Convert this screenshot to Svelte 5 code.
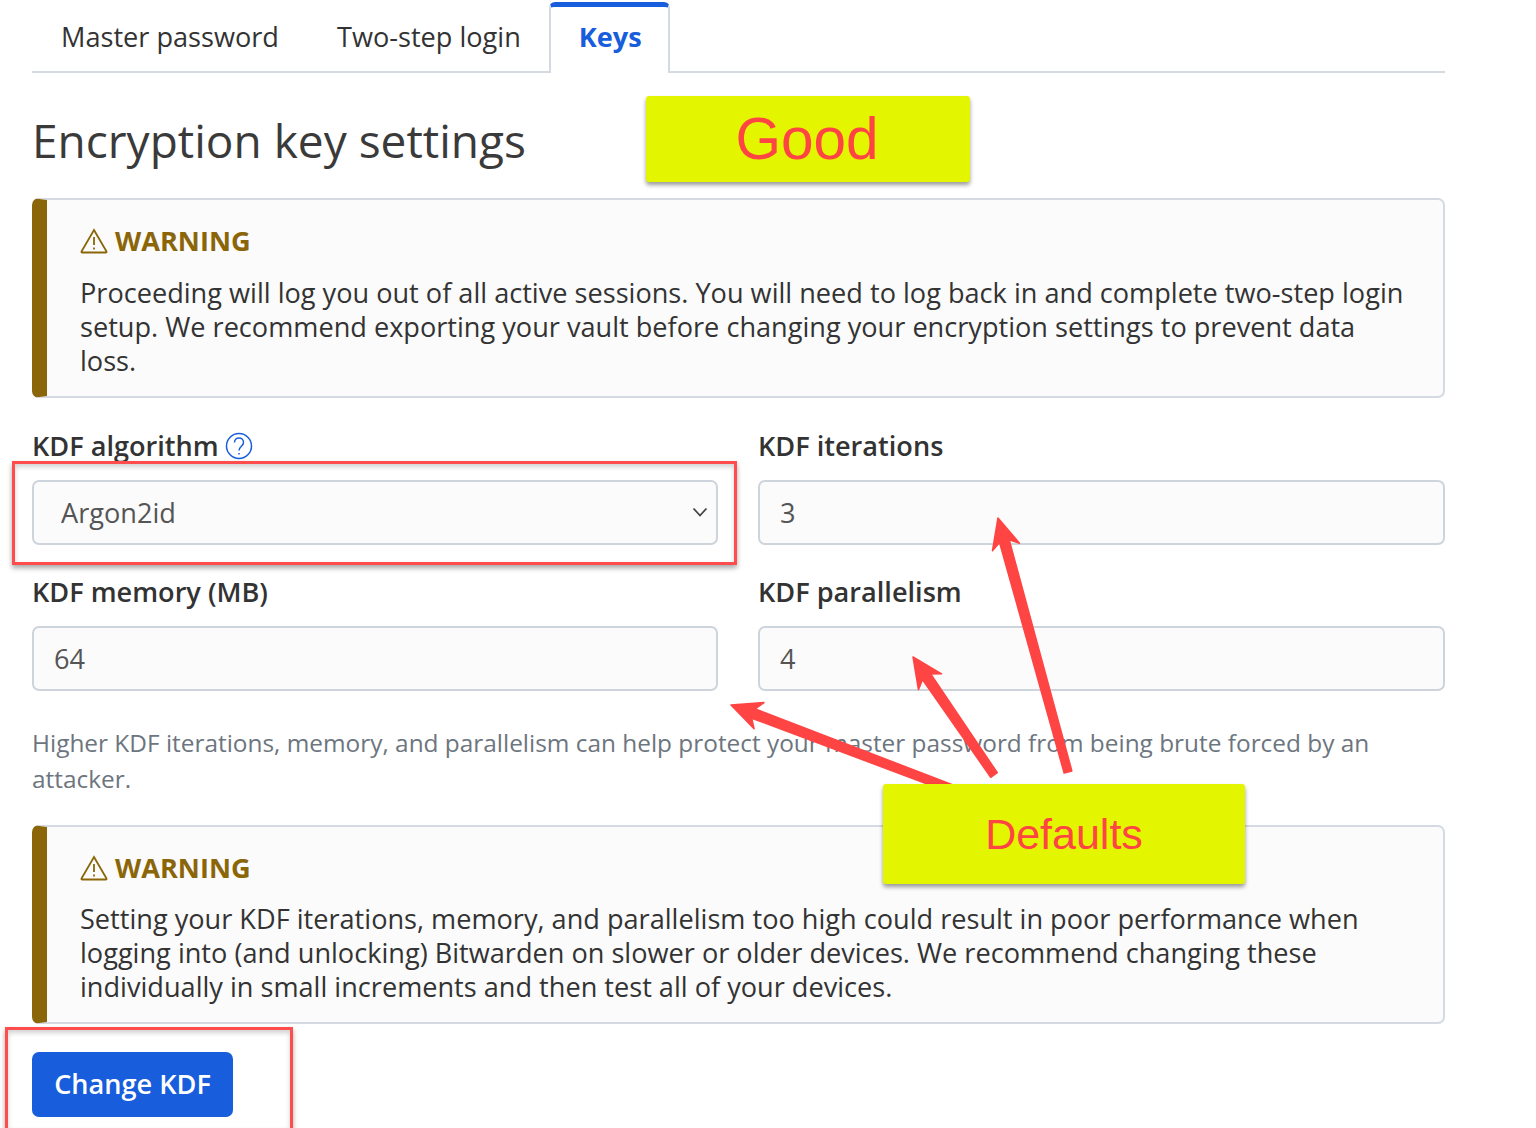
<script lang="ts">
  interface Arrow {
    tip: [number, number];
    tail: [number, number];
  }

  const tabs = ['Master password', 'Two-step login', 'Keys'];

  const arrows: Arrow[] = [
    { tip: [998, 518], tail: [1068, 772] },
    { tip: [913, 657], tail: [994, 775] },
    { tip: [731, 705], tail: [960, 792] },
  ];

  // tapered shaft with a flared head, same as the screenshot tool draws them
  function arrowPoints({ tip, tail }: Arrow) {
    const dx = tip[0] - tail[0];
    const dy = tip[1] - tail[1];
    const len = Math.hypot(dx, dy);
    const ux = dx / len;
    const uy = dy / len;
    const at = (along: number, side: number) =>
      `${tip[0] - ux * along - uy * side},${tip[1] - uy * along + ux * side}`;
    return [
      at(0, 0),
      at(30, 14),
      at(24, 5),
      at(len, 4),
      at(len, -4),
      at(24, -5),
      at(30, -14),
    ].join(' ');
  }
</script>

<div class="page">
  <nav class="tabs">
    {#each tabs as tab, i (tab)}
      <button class="tab" class:active={i === 2}>{tab}</button>
    {/each}
  </nav>

  <h1 class="title">Encryption key settings</h1>

  <div class="callout first">
    <div class="callout-title">
      <svg class="warn" viewBox="0 0 28 26" aria-hidden="true">
        <path d="M14 2 L26.5 23.5 a0.6 0.6 0 0 1 -0.5 1 H2 a0.6 0.6 0 0 1 -0.5 -1 Z" />
        <path d="M14 9 V17 M14 19.5 V21.5" />
      </svg>
      WARNING
    </div>
    <p>Proceeding will log you out of all active sessions. You will need to log back in and complete two-step login setup. We recommend exporting your vault before changing your encryption settings to prevent data loss.</p>
  </div>

  <div class="form-grid">
    <div class="field">
      <label for="kdf">
        KDF algorithm
        <svg class="help" viewBox="0 0 28 28" aria-hidden="true">
          <circle cx="14" cy="14" r="12.5" />
          <path d="M9.5 10.5 C9.5 4.5 18.5 4.5 18.5 10.5 C18.5 14 14 14.5 14 18.5 M14 21 V22.5" />
        </svg>
      </label>
      <div class="select-wrap">
        <select id="kdf" class="control select">
          <option>Argon2id</option>
        </select>
        <svg class="chevron" viewBox="0 0 16 10" aria-hidden="true">
          <path d="M1.5 1.5 L8 8.5 L14.5 1.5" />
        </svg>
      </div>
    </div>
    <div class="field">
      <label for="iterations">KDF iterations</label>
      <input id="iterations" class="control" value="3" />
    </div>
    <div class="field">
      <label for="memory">KDF memory (MB)</label>
      <input id="memory" class="control" value="64" />
    </div>
    <div class="field">
      <label for="parallelism">KDF parallelism</label>
      <input id="parallelism" class="control" value="4" />
    </div>
  </div>

  <p class="hint">Higher KDF iterations, memory, and parallelism can help protect your master password from being brute forced by an attacker.</p>

  <div class="callout">
    <div class="callout-title">
      <svg class="warn" viewBox="0 0 28 26" aria-hidden="true">
        <path d="M14 2 L26.5 23.5 a0.6 0.6 0 0 1 -0.5 1 H2 a0.6 0.6 0 0 1 -0.5 -1 Z" />
        <path d="M14 9 V17 M14 19.5 V21.5" />
      </svg>
      WARNING
    </div>
    <p>Setting your KDF iterations, memory, and parallelism too high could result in poor performance when logging into (and unlocking) Bitwarden on slower or older devices. We recommend changing these individually in small increments and then test all of your devices.</p>
  </div>

  <button class="submit">Change KDF</button>

  <!-- annotations pasted on top of the screenshot -->
  <svg class="arrows" viewBox="0 0 1536 1128" aria-hidden="true">
    {#each arrows as arrow}
      <polygon points={arrowPoints(arrow)} />
    {/each}
  </svg>
  <div class="note good">Good</div>
  <div class="note defaults">Defaults</div>
  <div class="frame frame-select"></div>
  <div class="frame frame-submit"></div>
</div>

<style>
  :global(body) {
    background: #fff;
    overflow: hidden;
  }

  .page {
    position: relative;
    width: 1536px;
    height: 1128px;
    box-sizing: border-box;
    padding: 2px 91px 0 32px;
    overflow: hidden;
    font-family: 'Open Sans', 'Noto Sans', sans-serif;
    font-size: 27.14px;
    line-height: 34px;
    color: #333;
  }

  .tabs {
    display: flex;
    height: 69px;
    border-bottom: 2px solid #d5dae2;
    box-sizing: content-box;
  }

  .tab {
    height: 69px;
    padding: 0 29px;
    border: 0;
    background: none;
    font: inherit;
    color: #333;
  }

  .tab.active {
    height: 71px;
    margin-left: -1px;
    padding: 0 26px 6px 28px;
    border: 2px solid #d5dae2;
    border-top: 5px solid #175ddc;
    border-bottom: 0;
    border-radius: 6px 6px 0 0;
    background: #fff;
    color: #175ddc;
    font-weight: 700;
  }

  .title {
    margin: 37px 0 0;
    font-size: 46px;
    line-height: 60px;
    font-weight: 400;
    color: #3a3a3a;
  }

  .callout {
    box-sizing: border-box;
    height: 199px;
    padding: 24px 30px 0 33px;
    border: 2px solid #d5dae2;
    border-left: 15px solid #8b6609;
    border-radius: 7px;
    background: #fbfbfb;
  }

  .callout.first {
    margin-top: 28px;
    height: 200px;
  }

  .callout-title {
    display: flex;
    align-items: center;
    gap: 7px;
    height: 34px;
    font-weight: 700;
    color: #8b6609;
  }

  .callout p {
    margin: 17px 0 0;
  }

  .callout.first p {
    margin-top: 18px;
  }

  .warn {
    width: 28px;
    height: 26px;
    fill: none;
    stroke: #8b6609;
    stroke-width: 1.8;
  }

  .form-grid {
    display: grid;
    grid-template-columns: 686px 687px;
    column-gap: 40px;
    row-gap: 30px;
    margin-top: 31px;
  }

  .field label {
    display: flex;
    align-items: center;
    gap: 6px;
    height: 34px;
    margin-bottom: 17px;
    font-weight: 600;
    color: #333;
  }

  .help {
    width: 28px;
    height: 28px;
    fill: none;
    stroke: #175ddc;
    stroke-width: 1.5;
  }

  .control {
    display: block;
    box-sizing: border-box;
    width: 100%;
    height: 65px;
    padding: 0 20px;
    border: 2px solid #ced4dc;
    border-radius: 7px;
    background: #fbfbfb;
    font: inherit;
    color: #555;
  }

  .select-wrap {
    position: relative;
  }

  .select {
    padding-left: 27px;
    appearance: none;
  }

  .chevron {
    position: absolute;
    top: 27px;
    right: 10px;
    width: 16px;
    height: 10px;
    fill: none;
    stroke: #444;
    stroke-width: 1.8;
  }

  .hint {
    margin: 34px 0 28px;
    font-size: 24.4px;
    line-height: 36px;
    color: #6d757e;
  }

  .submit {
    display: block;
    width: 201px;
    height: 65px;
    margin-top: 28px;
    padding-bottom: 2px;
    border: 0;
    border-radius: 7px;
    background: #175ddc;
    font: inherit;
    font-weight: 600;
    color: #fff;
  }

  .arrows {
    position: absolute;
    top: 0;
    left: 0;
    width: 1536px;
    height: 1128px;
    fill: #ff4444;
    stroke: #ff4444;
    stroke-width: 1.5;
    stroke-linejoin: round;
  }

  .note {
    position: absolute;
    display: flex;
    align-items: center;
    justify-content: center;
    border-radius: 3px;
    background: #e3f600;
    box-shadow: 0 3px 4px rgba(0, 0, 0, 0.4);
    font-family: 'Liberation Sans', Arial, sans-serif;
    color: #ff4444;
  }

  .good {
    top: 96px;
    left: 646px;
    width: 322px;
    height: 86px;
    padding-right: 2px;
    font-size: 58.5px;
  }

  .defaults {
    top: 784px;
    left: 883px;
    width: 362px;
    height: 100px;
    font-size: 43px;
  }

  .frame {
    position: absolute;
    box-sizing: border-box;
    border: 3px solid #ff4d4d;
    box-shadow: 0 3px 5px rgba(0, 0, 0, 0.35), inset 0 3px 5px rgba(0, 0, 0, 0.18);
  }

  .frame-select {
    top: 461px;
    left: 12px;
    width: 725px;
    height: 104px;
  }

  .frame-submit {
    top: 1027px;
    left: 5px;
    width: 288px;
    height: 104px;
  }
</style>
